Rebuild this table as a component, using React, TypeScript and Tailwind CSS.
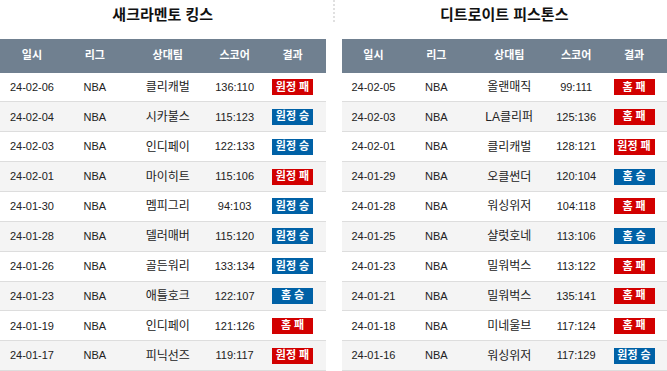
import React from "react";

type Row = [string, string, string, string, string];

const left: Row[] = [
  ["24-02-06", "NBA", "클리캐벌", "136:110", "원정 패"],
  ["24-02-04", "NBA", "시카불스", "115:123", "원정 승"],
  ["24-02-03", "NBA", "인디페이", "122:133", "원정 승"],
  ["24-02-01", "NBA", "마이히트", "115:106", "원정 패"],
  ["24-01-30", "NBA", "멤피그리", "94:103", "원정 승"],
  ["24-01-28", "NBA", "델러매버", "115:120", "원정 승"],
  ["24-01-26", "NBA", "골든워리", "133:134", "원정 승"],
  ["24-01-23", "NBA", "애틀호크", "122:107", "홈 승"],
  ["24-01-19", "NBA", "인디페이", "121:126", "홈 패"],
  ["24-01-17", "NBA", "피닉선즈", "119:117", "원정 패"],
];

const right: Row[] = [
  ["24-02-05", "NBA", "올랜매직", "99:111", "홈 패"],
  ["24-02-03", "NBA", "LA클리퍼", "125:136", "홈 패"],
  ["24-02-01", "NBA", "클리캐벌", "128:121", "원정 패"],
  ["24-01-29", "NBA", "오클썬더", "120:104", "홈 승"],
  ["24-01-28", "NBA", "워싱위저", "104:118", "홈 패"],
  ["24-01-25", "NBA", "샬럿호네", "113:106", "홈 승"],
  ["24-01-23", "NBA", "밀워벅스", "113:122", "홈 패"],
  ["24-01-21", "NBA", "밀워벅스", "135:141", "홈 패"],
  ["24-01-18", "NBA", "미네울브", "117:124", "홈 패"],
  ["24-01-16", "NBA", "워싱위저", "117:129", "원정 승"],
];

function Badge({ text }: { text: string }) {
  const win = text.endsWith("승");
  return (
    <span
      className={
        "inline-flex h-[16px] w-[41px] items-center justify-center text-[11px] font-bold leading-none text-white " +
        (win ? "bg-[#0061a6]" : "bg-[#d20000]")
      }
    >
      {text}
    </span>
  );
}

function Table({ title, rows }: { title: string; rows: Row[] }) {
  return (
    <div className="flex flex-1 flex-col">
      <div className="flex h-[39px] items-start justify-center pt-[4px] text-[15px] font-bold leading-[22px] text-[#111]">
        {title}
      </div>
      <div className="grid h-[34px] grid-cols-[64fr_62fr_84fr_50fr_66fr] items-center bg-[#708090] text-[11px] font-bold text-white">
        <div className="text-center">일시</div>
        <div className="text-center">리그</div>
        <div className="text-center">상대팀</div>
        <div className="text-center">스코어</div>
        <div className="text-center">결과</div>
      </div>
      {rows.map((r, i) => (
        <div
          key={i}
          className={
            "grid h-[30px] grid-cols-[64fr_62fr_84fr_50fr_66fr] items-center border-b border-[#dddddd] text-[11px] text-[#222] " +
            (i % 2 === 1 ? "bg-[#f4f4f4]" : "bg-white")
          }
        >
          <div className="text-center">{r[0]}</div>
          <div className="text-center">{r[1]}</div>
          <div className="text-center text-[12px]">{r[2]}</div>
          <div className="text-center">{r[3]}</div>
          <div className="flex justify-center">
            <Badge text={r[4]} />
          </div>
        </div>
      ))}
    </div>
  );
}

export default function App() {
  return (
    <div
      className="flex h-[371px] w-[667px] overflow-hidden bg-white"
      style={{ fontFamily: '"Liberation Sans", "Noto Sans CJK KR", sans-serif' }}
    >
      <Table title="새크라멘토 킹스" rows={left} />
      <div className="flex w-[16px] shrink-0 justify-center">
        <div className="h-[22px] border-l-2 border-dotted border-[#e0e0e0]" />
      </div>
      <Table title="디트로이트 피스톤스" rows={right} />
    </div>
  );
}
